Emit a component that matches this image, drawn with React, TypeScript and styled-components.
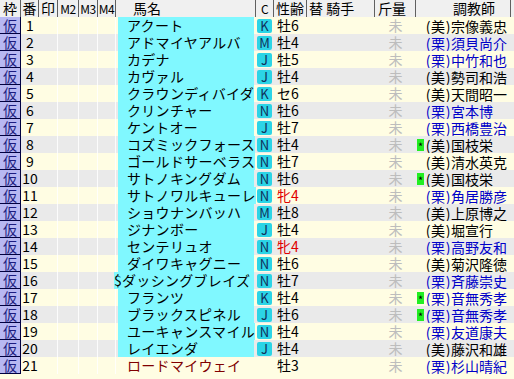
import React from 'react';
import styled, { createGlobalStyle } from 'styled-components';

const GlobalStyles = createGlobalStyle`
  html, body {
    margin: 0;
    padding: 0;
    background: #fffde3;
  }
  body {
    font-family: 'Noto Sans CJK JP', 'Noto Sans', sans-serif;
    font-size: 14px;
    color: #000;
  }
`;

const COLS = '21px 18px 19px 21px 19px 18px 140px 18px 33px 68px 41px 95px 3px';

type Horse = {
  name: string;
  cls?: string;
  sex: string;
  mare?: boolean;
  stable: '美' | '栗';
  trainer: string;
  star?: boolean;
  local?: boolean;
};

const horses: Horse[] = [
  { name: 'アクート', cls: 'K', sex: '牡6', stable: '美', trainer: '宗像義忠' },
  { name: 'アドマイヤアルバ', cls: 'M', sex: '牡4', stable: '栗', trainer: '須貝尚介' },
  { name: 'カデナ', cls: 'J', sex: '牡5', stable: '栗', trainer: '中竹和也' },
  { name: 'カヴァル', cls: 'J', sex: '牡4', stable: '美', trainer: '勢司和浩' },
  { name: 'クラウンディバイダ', cls: 'K', sex: 'セ6', stable: '美', trainer: '天間昭一' },
  { name: 'クリンチャー', cls: 'N', sex: '牡6', stable: '栗', trainer: '宮本博' },
  { name: 'ケントオー', cls: 'J', sex: '牡7', stable: '栗', trainer: '西橋豊治' },
  { name: 'コズミックフォース', cls: 'N', sex: '牡4', stable: '美', trainer: '国枝栄', star: true },
  { name: 'ゴールドサーベラス', cls: 'N', sex: '牡7', stable: '美', trainer: '清水英克' },
  { name: 'サトノキングダム', cls: 'N', sex: '牡6', stable: '美', trainer: '国枝栄', star: true },
  { name: 'サトノワルキューレ', cls: 'N', sex: '牝4', mare: true, stable: '栗', trainer: '角居勝彦' },
  { name: 'ショウナンバッハ', cls: 'M', sex: '牡8', stable: '美', trainer: '上原博之' },
  { name: 'ジナンボー', cls: 'J', sex: '牡4', stable: '美', trainer: '堀宣行' },
  { name: 'センテリュオ', cls: 'N', sex: '牝4', mare: true, stable: '栗', trainer: '高野友和' },
  { name: 'ダイワキャグニー', cls: 'N', sex: '牡6', stable: '美', trainer: '菊沢隆徳' },
  { name: '$ダッシングブレイズ', cls: 'N', sex: '牡7', stable: '栗', trainer: '斉藤崇史' },
  { name: 'フランツ', cls: 'K', sex: '牡4', stable: '栗', trainer: '音無秀孝', star: true },
  { name: 'ブラックスピネル', cls: 'J', sex: '牡6', stable: '栗', trainer: '音無秀孝', star: true },
  { name: 'ユーキャンスマイル', cls: 'N', sex: '牡4', stable: '栗', trainer: '友道康夫' },
  { name: 'レイエンダ', cls: 'J', sex: '牡4', stable: '美', trainer: '藤沢和雄' },
  { name: 'ロードマイウェイ', sex: '牡3', stable: '栗', trainer: '杉山晴紀', local: true },
];

const Table = styled.div`
  width: 514px;
  display: flex;
  flex-direction: column;
`;

const HeaderRow = styled.div`
  display: grid;
  grid-template-columns: ${COLS};
  height: 17px;
  background: #f0f0f0;
  line-height: 17px;
`;

const HeadCell = styled.div<{ $align?: string; $pad?: number; $small?: boolean }>`
  border-right: 1px solid #606060;
  text-align: ${(p) => p.$align ?? 'center'};
  padding-left: ${(p) => p.$pad ?? 0}px;
  font-size: ${(p) => (p.$small ? '12px' : '14px')};
  letter-spacing: ${(p) => (p.$small ? '-0.5px' : '0')};
  white-space: nowrap;
`;

const Row = styled.div<{ $even: boolean }>`
  display: grid;
  grid-template-columns: ${COLS};
  height: 17px;
  line-height: 16px;
  background: ${(p) => (p.$even ? '#eaeaea' : '#fffde3')};
`;

const FrameCell = styled.div`
  background: #b8b8f2;
  color: #1c1c80;
  border-right: 1px solid #000040;
  border-bottom: 1px solid #000040;
  text-align: center;
`;

const NumCell = styled.div`
  text-align: center;
`;

const MarkCell = styled.div`
  border-right: 1px solid rgba(255, 255, 255, 0.85);
`;

const NameCell = styled.div`
  padding: 0 2px;
  display: flex;
`;

const NameBox = styled.div<{ $local?: boolean; $long?: boolean }>`
  flex: 1;
  background: ${(p) => (p.$local ? 'transparent' : '#80f8ff')};
  color: ${(p) => (p.$local ? '#800000' : '#000')};
  padding-left: ${(p) => (p.$long ? 0 : 9)}px;
  margin-left: ${(p) => (p.$long ? -4 : 0)}px;
  white-space: nowrap;
  letter-spacing: 0.3px;
`;

const ClassCell = styled.div`
  display: flex;
  align-items: center;
  padding-left: 1px;
`;

const ClassBadge = styled.span`
  width: 15px;
  height: 14px;
  border-radius: 2px;
  background: #2cd4e6;
  color: #10305a;
  font-size: 13px;
  line-height: 14px;
  text-align: center;
`;

const SexCell = styled.div<{ $mare?: boolean }>`
  padding-left: 3px;
  color: ${(p) => (p.$mare ? '#e00000' : '#000')};
`;

const WeightCell = styled.div`
  text-align: center;
  color: #bdbdbd;
`;

const TrainerCell = styled.div<{ $west: boolean }>`
  display: flex;
  align-items: center;
  padding-left: 1px;
  color: ${(p) => (p.$west ? '#0000c8' : '#000')};
  white-space: nowrap;
`;

const StarBox = styled.span<{ $on?: boolean }>`
  width: 7px;
  height: 12px;
  margin-right: 1px;
  background: ${(p) => (p.$on ? '#22ee22' : 'transparent')};
  color: #000;
  font-size: 11px;
  line-height: 14px;
  text-align: center;
  overflow: hidden;
`;

const Paren = styled.span`
  display: inline-block;
  width: 6px;
  text-align: center;
`;

export default function App() {
  return (
    <>
      <GlobalStyles />
      <Table>
        <HeaderRow>
          <HeadCell>枠</HeadCell>
          <HeadCell>番</HeadCell>
          <HeadCell>印</HeadCell>
          <HeadCell $small>M2</HeadCell>
          <HeadCell $small>M3</HeadCell>
          <HeadCell $small>M4</HeadCell>
          <HeadCell $align="left" $pad={17}>
            馬名
          </HeadCell>
          <HeadCell $small>C</HeadCell>
          <HeadCell $align="left" $pad={2}>
            性齢
          </HeadCell>
          <HeadCell $align="left" $pad={2}>
            替 騎手
          </HeadCell>
          <HeadCell $align="left" $pad={3}>
            斤量
          </HeadCell>
          <HeadCell $align="left" $pad={37}>
            調教師
          </HeadCell>
          <div />
        </HeaderRow>
        {horses.map((h, i) => (
          <Row key={i} $even={i % 2 === 1}>
            <FrameCell>仮</FrameCell>
            <NumCell>{i + 1}</NumCell>
            <MarkCell />
            <MarkCell />
            <MarkCell />
            <MarkCell />
            <NameCell>
              <NameBox $local={h.local} $long={h.name.length > 9}>
                {h.name}
              </NameBox>
            </NameCell>
            <ClassCell>{h.cls && <ClassBadge>{h.cls}</ClassBadge>}</ClassCell>
            <SexCell $mare={h.mare}>{h.sex}</SexCell>
            <div />
            <WeightCell>未</WeightCell>
            <TrainerCell $west={h.stable === '栗'}>
              <StarBox $on={h.star}>{h.star ? '*' : ''}</StarBox>
              <Paren>(</Paren>
              {h.stable}
              <Paren>)</Paren>
              {h.trainer}
            </TrainerCell>
            <div />
          </Row>
        ))}
      </Table>
    </>
  );
}
